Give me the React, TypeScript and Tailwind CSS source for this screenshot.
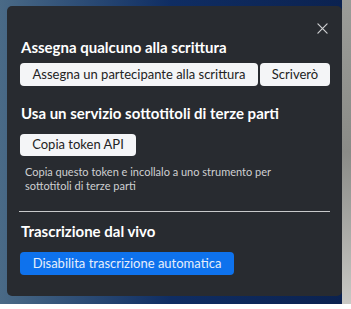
export default function App() {
  return (
    <div className="w-[351px] h-[309px] overflow-hidden flex flex-col bg-white" style={{ fontFamily: '"Segoe UI", Lato, "Noto Sans", sans-serif' }}>
      <div className="flex h-[304px]">
        <div className="w-[342px] bg-gradient-to-r from-[#4a6a86] via-[#0f2d63] to-[#0b2250] pl-[7px] pt-[6px] pb-[8px]">
          <div className="h-[290px] rounded-[5px] bg-[#282b30] pl-[13px] pr-[12px] pt-[14px] relative">
            <button className="absolute top-[17px] right-[14px] w-[11px] h-[11px] text-[#cfd0d2]">
              <svg viewBox="0 0 12 12" width="11" height="11" stroke="currentColor" strokeWidth="1.3" strokeLinecap="round">
                <path d="M1 1 L11 11 M11 1 L1 11" />
              </svg>
            </button>
            <h3 className="text-[15px] font-bold text-white leading-[18px] pt-[18px] pl-[1px]">Assegna qualcuno alla scrittura</h3>
            <div className="flex gap-[2px] mt-[7px]">
              <button className="h-[23px] w-[238px] rounded-[4px] bg-[#f4f5f7] text-[13px] text-[#232323]">Assegna un partecipante alla scrittura</button>
              <button className="h-[23px] w-[70px] rounded-[4px] bg-[#f4f5f7] text-[13px] text-[#232323]">Scriverò</button>
            </div>
            <h3 className="text-[15px] font-bold text-white leading-[18px] mt-[18px] pl-[1px]">Usa un servizio sottotitoli di terze parti</h3>
            <button className="mt-[12px] h-[22px] w-[116px] rounded-[4px] bg-[#f4f5f7] text-[13px] text-[#232323]">Copia token API</button>
            <p className="mt-[9px] text-[11px] leading-[14px] text-[#cfd0d2] pl-[5px] pr-[10px]">Copia questo token e incollalo a uno strumento per sottotitoli di terze parti</p>
            <div className="mt-[18px] h-px bg-[#c8c9cb] w-[311px] -ml-[1px]" />
            <h3 className="text-[15px] font-bold text-white leading-[18px] mt-[10px] pl-[1px]">Trascrizione dal vivo</h3>
            <button className="mt-[12px] h-[23px] w-[214px] rounded-[4px] bg-[#0e72ed] text-[13px] text-[#e6eefb]">Disabilita trascrizione automatica</button>
          </div>
        </div>
        <div className="flex-1 bg-gradient-to-b from-[#9b9c98] via-[#8a8b87] to-[#c9c9c5]" />
      </div>
      <div className="h-[5px] bg-white" />
    </div>
  );
}
